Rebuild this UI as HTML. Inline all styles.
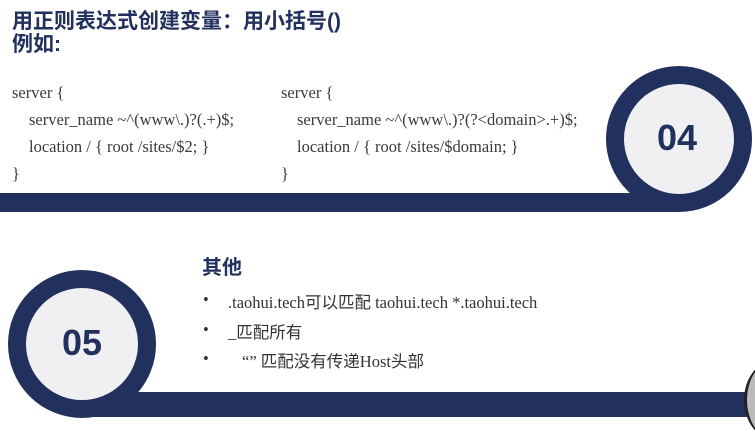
<!DOCTYPE html>
<html><head><meta charset="utf-8"><style>
body{margin:0;width:755px;height:432px;overflow:hidden;background:#fff;position:relative;font-family:"Liberation Sans","Noto Sans CJK SC",sans-serif}
.a{position:absolute;white-space:nowrap}
.t{font-weight:bold;color:#22305e;font-size:21px;line-height:22px}
.c{font-family:"Liberation Serif","Noto Serif CJK SC",serif;font-size:16.5px;color:#3a3a3a}
.b{font-family:"Liberation Serif","Noto Sans CJK SC",serif;font-size:16.5px;color:#333}
.n{font-weight:bold;color:#22305e;font-size:36px}
</style></head><body>
<div class="a t" style="left:12px;top:11px">用正则表达式创建变量：用小括号()</div>
<div class="a t" style="left:12px;top:34px">例如:</div>
<div class="a c" style="left:12px;top:83px">server {</div>
<div class="a c" style="left:29px;top:110px">server_name ~^(www\.)?(.+)$;</div>
<div class="a c" style="left:29px;top:137px">location / { root /sites/$2; }</div>
<div class="a c" style="left:12px;top:164px">}</div>
<div class="a c" style="left:281px;top:83px">server {</div>
<div class="a c" style="left:297px;top:110px">server_name ~^(www\.)?(?&lt;domain&gt;.+)$;</div>
<div class="a c" style="left:297px;top:137px">location / { root /sites/$domain; }</div>
<div class="a c" style="left:281px;top:164px">}</div>
<div class="a" style="left:0;top:193px;width:680px;height:19px;background:#22305e"></div>
<div class="a" style="left:606px;top:66px;width:110px;height:110px;border-radius:50%;border:18px solid #22305e;background:#f0f0f2"></div>
<div class="a n" style="left:657px;top:117px">04</div>
<div class="a" style="left:80px;top:392px;width:680px;height:25px;background:#22305e"></div>
<div class="a" style="left:8px;top:270px;width:112px;height:112px;border-radius:50%;border:18px solid #22305e;background:#f0f0f2"></div>
<div class="a n" style="left:62px;top:322px">05</div>
<div class="a" style="left:744px;top:360px;width:60px;height:80px;border-radius:50%;background:#bbb;border-left:3px solid #222"></div>
<div class="a" style="left:202px;top:251px;font-weight:bold;color:#22305e;font-size:20px">其他</div>
<div class="a b" style="left:203px;top:290px">•</div>
<div class="a b" style="left:228px;top:289px">.taohui.tech可以匹配 taohui.tech *.taohui.tech</div>
<div class="a b" style="left:203px;top:320px">•</div>
<div class="a b" style="left:228px;top:319px">_匹配所有</div>
<div class="a b" style="left:203px;top:349px">•</div>
<div class="a b" style="left:242px;top:348px">“” 匹配没有传递Host头部</div>
</body></html>
